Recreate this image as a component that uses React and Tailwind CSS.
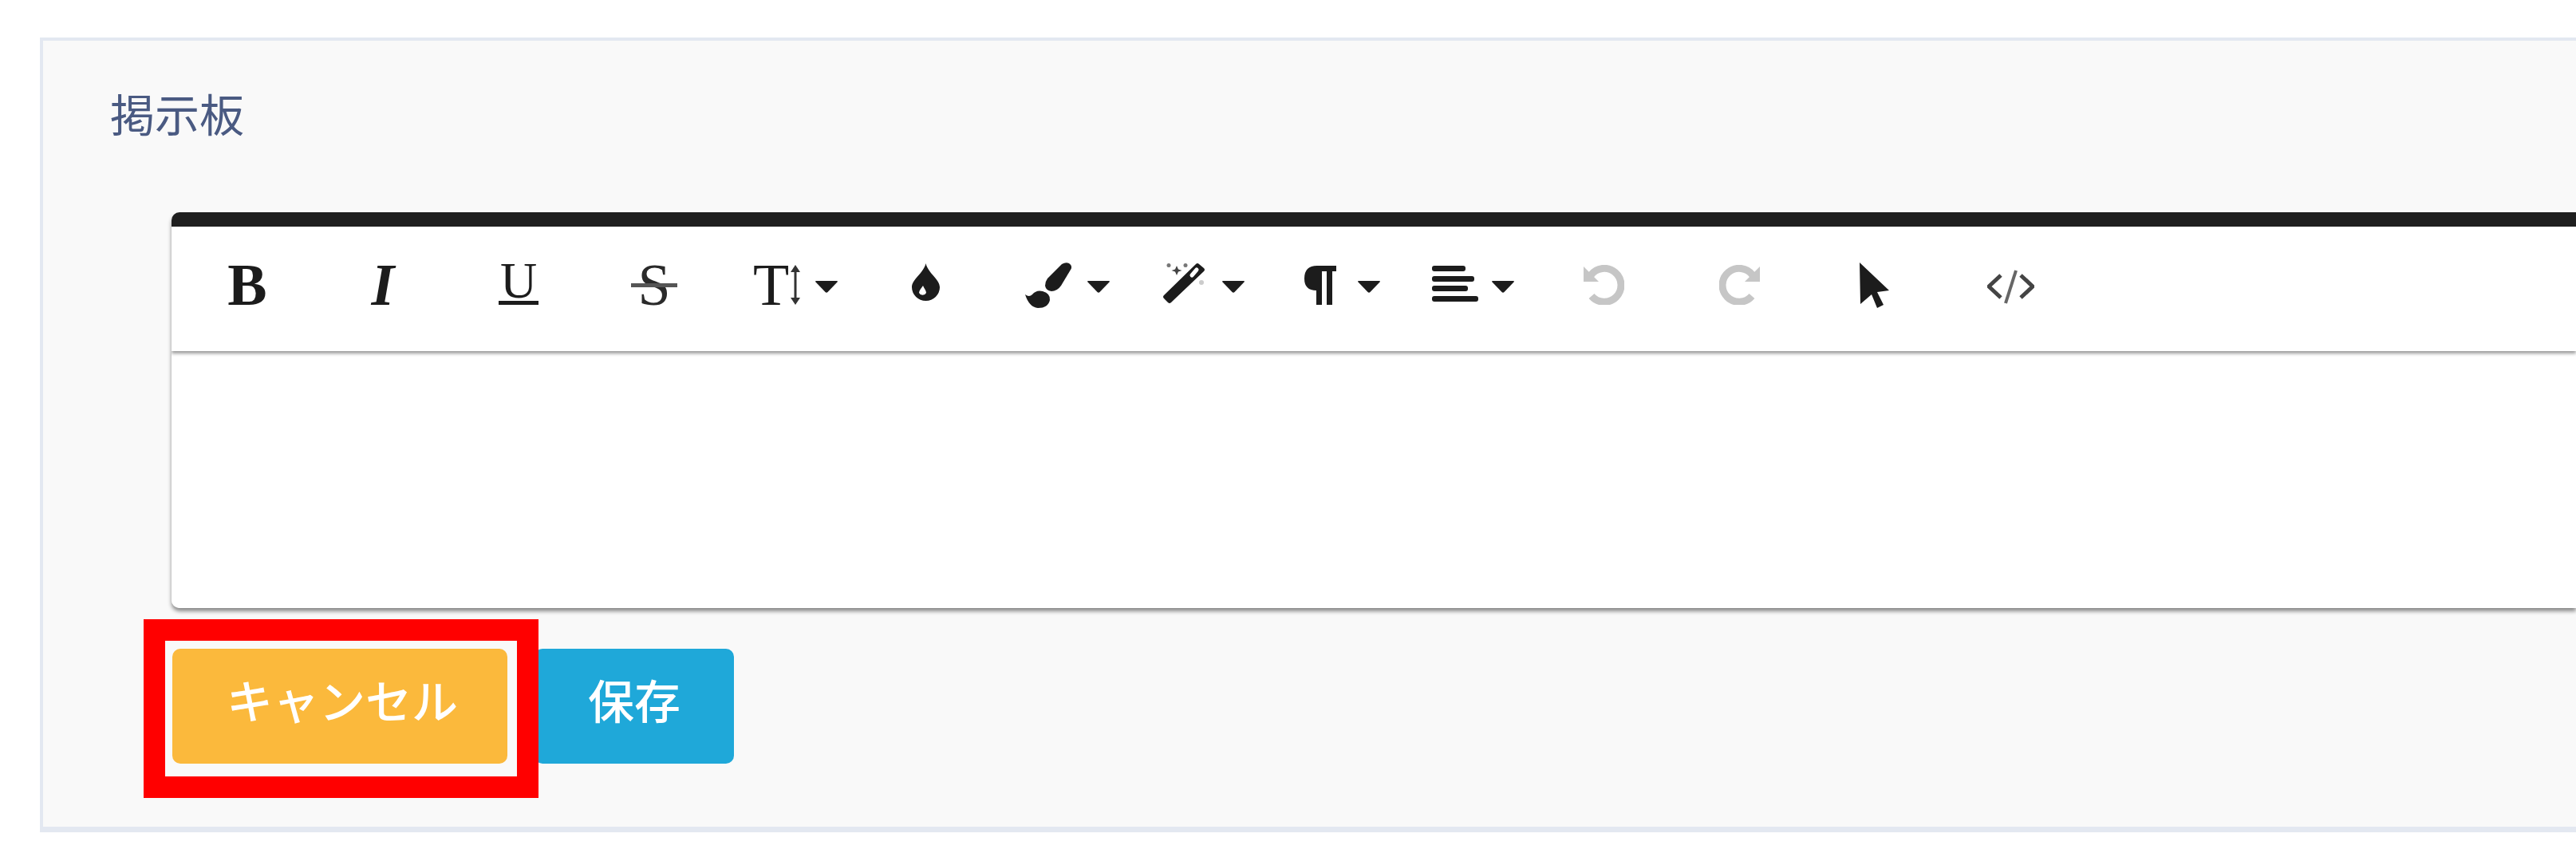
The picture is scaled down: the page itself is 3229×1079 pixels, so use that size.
import React from "react";

const Caret = () => (
  <svg width="28" height="15" viewBox="0 0 28 15" className="mt-[5px] shrink-0" fill="#1c1c1c">
    <path d="M1 0H27Q28.5 0 27.5 1.5L15.5 14Q14 15.5 12.5 14L0.5 1.5Q-0.5 0 1 0Z" />
  </svg>
);

const Slot = ({ className = "", children }) => (
  <div className={`flex w-[170px] shrink-0 items-center ${className}`}>{children}</div>
);

const Arrows = () => (
  <svg width="12" height="50" viewBox="0 0 12 50" className="ml-[2px] shrink-0" fill="#333">
    <path d="M6 0L12 9H0Z" />
    <path d="M6 50L12 41H0Z" />
    <rect x="4.5" y="6" width="3" height="38" />
  </svg>
);

const Drop = () => (
  <svg width="35" height="47" viewBox="0 0 35 47" className="mb-[7px]">
    <path fill="#1c1c1c" fillRule="evenodd" d="M17.5 0C20 12 35 20 35 30A17.5 17 0 0 1 0 30C0 20 15 12 17.5 0ZM14 28C12 31 9 34 9 37A5 5 0 0 0 18 37C18 34 15 31 14 28Z" />
  </svg>
);

const Brush = () => (
  <svg width="58" height="57" viewBox="0 0 58 57" className="shrink-0" fill="#1c1c1c">
    <path d="M46 2Q51-1 55 1Q60 4 57 9L45 29Q40 36 33 36Q26 35 25 29Q25 24 28 20Z" />
    <path d="M0 40Q5 44 9 40Q14 34 22 36Q32 39 31 47Q29 57 16 57Q5 56 0 40Z" />
  </svg>
);

const Wand = () => (
  <svg width="52" height="50" viewBox="0 0 52 50" className="mb-[4px] shrink-0">
    <path fill="#1c1c1c" d="M41 1Q43-1 45 1L51 6Q53 8 51 10L10 49Q8 51 6 49L1 44Q-1 42 1 40Z" />
    <path stroke="#fff" strokeWidth="5" strokeLinecap="round" d="M36 15L42 8" />
    <circle cx="7" cy="2.5" r="2.5" fill="#777" />
    <circle cx="28" cy="2.5" r="2.5" fill="#777" />
    <path fill="#444" d="M17 3L19 7.500L23.500 9L19 10.500L17 15L15 10.500L10.500 9L15 7.500Z" />
    <circle cx="48" cy="24" r="3" fill="#ccc" />
  </svg>
);

const Pilcrow = () => (
  <svg width="40" height="49" viewBox="0 0 40 49" className="shrink-0" fill="#1c1c1c">
    <path d="M16 0H40V7H35V49H28V7H22V49H15V31Q0 31 0 16Q0 0 16 0Z" />
  </svg>
);

const Align = () => (
  <svg width="58" height="45" viewBox="0 0 58 45" className="mb-[4px] shrink-0" fill="#1c1c1c">
    <rect y="0" width="42" height="7" rx="3" />
    <rect y="13" width="53" height="7" rx="3" />
    <rect y="25" width="45" height="7" rx="3" />
    <rect y="38" width="58" height="7" rx="3" />
  </svg>
);

const Undo = ({ flip }) => (
  <svg width="51" height="50" viewBox="0 0 51 50" className={flip ? "-scale-x-100" : ""}>
    <path d="M9 13A21 21 0 1 1 10 39" fill="none" stroke="#c6c6c6" strokeWidth="9" />
    <path d="M0 2V21H19Z" fill="#c6c6c6" />
  </svg>
);

const Cursor = () => (
  <svg width="38" height="57" viewBox="0 0 38 57" fill="#1c1c1c">
    <path d="M0 0L37 35L22 37L30 53L22 57L15 40L1 52Z" />
  </svg>
);

const Code = () => (
  <svg width="59" height="43" viewBox="0 0 59 43" className="mt-[5px]" fill="none" strokeWidth="5">
    <path d="M17 7L2 21L17 35" stroke="#444" />
    <path d="M36 1L23 42" stroke="#666" strokeWidth="4" />
    <path d="M42 7L57 21L42 35" stroke="#444" />
  </svg>
);

export default function App() {
  return (
    <div className="h-[1079px] w-[3229px] overflow-hidden bg-white pl-[50px] pt-[47px] font-['Noto_Sans_CJK_JP',sans-serif]">
      <div className="relative border-b-[7px] border-l-4 border-t-4 border-[#e3e8f1] bg-[#f9f9f9] pb-[79px] pt-[58px]">
        <div className="pl-[84px] text-[56px] leading-[64px] text-[#4a5a82]">掲示板</div>

        <div className="ml-[161px] mt-[93px] overflow-hidden rounded-l-[10px] border-t-[18px] border-[#1f1f1f] bg-white shadow-[0_4px_5px_rgba(0,0,0,0.45)]">
          <div className="relative z-10 flex h-[156px] items-center bg-white pb-[10px] pl-[10px] text-[#1c1c1c] shadow-[0_3px_4px_rgba(0,0,0,0.4)] font-['Liberation_Serif',serif]">
            <Slot className="justify-center">
              <span className="text-[74px] font-bold leading-[74px]">B</span>
            </Slot>
            <Slot className="justify-center">
              <span className="text-[74px] font-bold italic leading-[74px]">I</span>
            </Slot>
            <Slot className="justify-center">
              <span className="mb-[6px] inline-block border-b-[5px] border-[#1c1c1c] px-[2px] text-[64px] leading-[50px]">U</span>
            </Slot>
            <Slot className="justify-center">
              <span className="relative inline-block text-[74px] leading-[74px] text-[#2a2a2a]">
                S
                <span className="absolute left-[-8px] top-[35px] h-[5px] w-[58px] bg-[#555]" />
              </span>
            </Slot>
            <Slot className="pl-[39px]">
              <span className="text-[74px] leading-[74px]">T</span>
              <Arrows />
              <span className="ml-[19px] flex"><Caret /></span>
            </Slot>
            <Slot className="justify-center">
              <Drop />
            </Slot>
            <Slot className="pl-[40px]">
              <Brush />
              <span className="ml-[20px] flex"><Caret /></span>
            </Slot>
            <Slot className="pl-[43px]">
              <Wand />
              <span className="ml-[22px] flex"><Caret /></span>
            </Slot>
            <Slot className="pl-[50px]">
              <Pilcrow />
              <span className="ml-[27px] flex"><Caret /></span>
            </Slot>
            <Slot className="pl-[40px]">
              <Align />
              <span className="ml-[17px] flex"><Caret /></span>
            </Slot>
            <Slot className="justify-center">
              <Undo />
            </Slot>
            <Slot className="justify-center">
              <Undo flip />
            </Slot>
            <Slot className="justify-center">
              <Cursor />
            </Slot>
            <Slot className="justify-center">
              <Code />
            </Slot>
          </div>
          <div className="h-[322px] bg-white" />
        </div>

        <div className="ml-[162px] mt-[51px] flex gap-[34px] text-[58px] font-medium text-white">
          <button className="flex h-[144px] w-[420px] items-center justify-center rounded-[10px] bg-[#fbb93c] pb-[18px] pl-[6px]">キャンセル</button>
          <button className="flex h-[144px] w-[250px] items-center justify-center rounded-[10px] bg-[#1fa8d9] pb-[18px]">保存</button>
        </div>

        <div className="absolute left-[126px] top-[725px] h-[224px] w-[495px] border-[27px] border-[#ff0000]" />
      </div>
    </div>
  );
}
